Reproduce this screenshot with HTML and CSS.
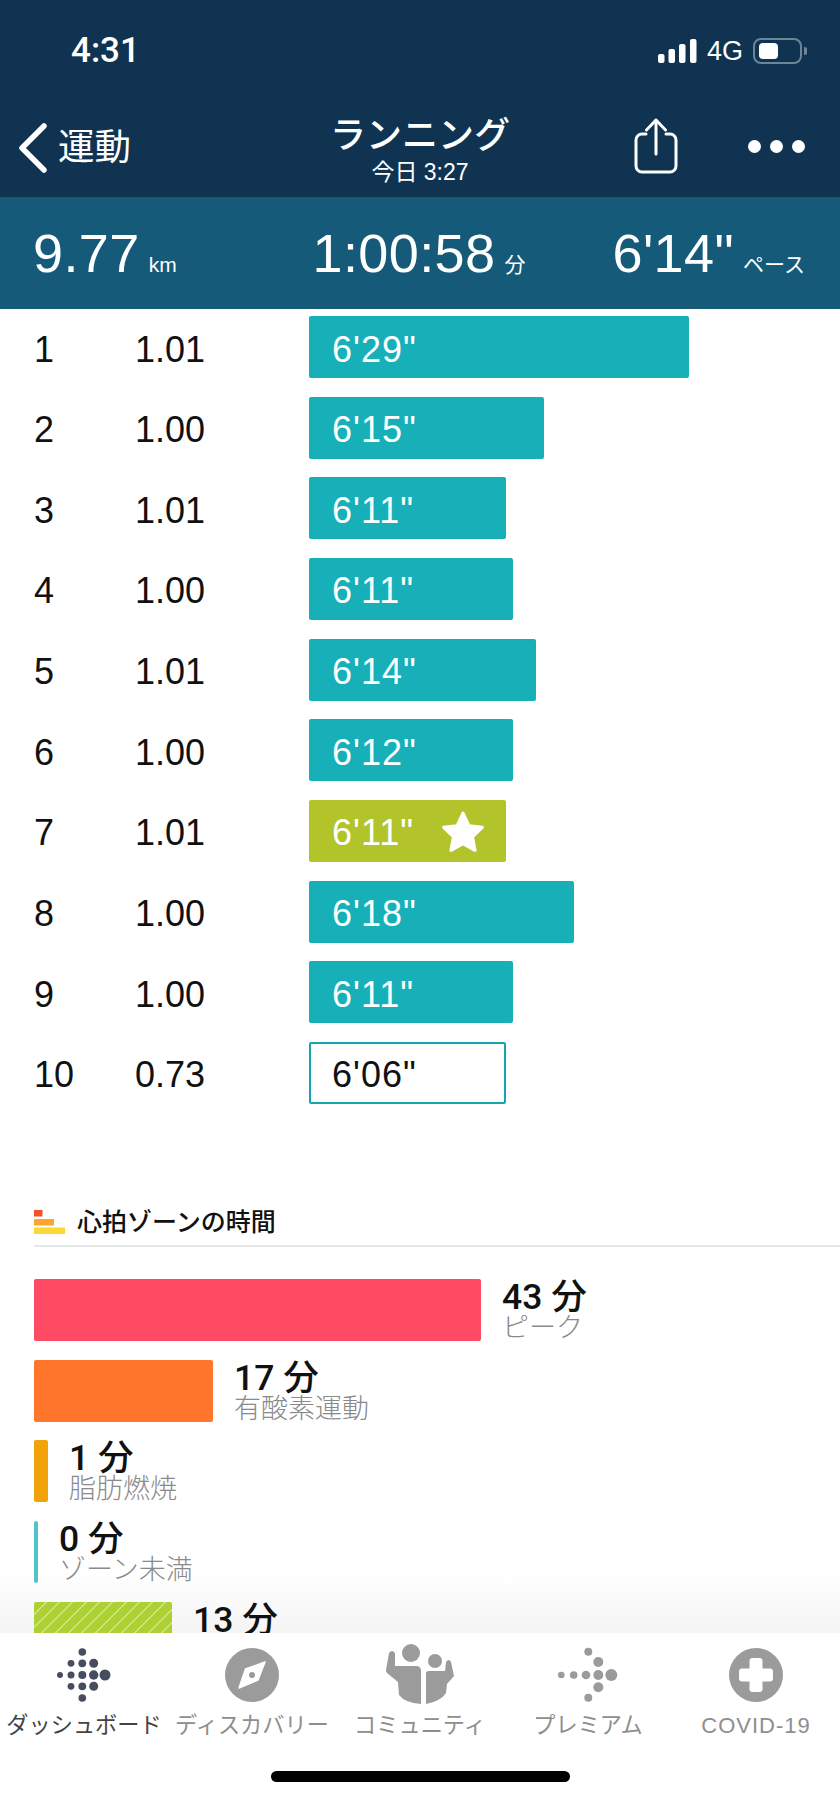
FILE: index.html
```html
<!DOCTYPE html>
<html lang="ja">
<head>
    <meta charset="UTF-8">
    <meta name="viewport" content="width=device-width, initial-scale=1.0">
    <title>ランニング</title>
    <link rel="stylesheet" href="styles.css">
</head>
<body>
    <div class="screen">
        <header class="topbar">
            <div class="status">
                <span class="clock">4:31</span>
                <div class="status-right">
                    <svg class="signal" viewBox="0 0 39 24" width="39" height="24">
                        <rect x="0" y="15" width="6.5" height="9" rx="2" />
                        <rect x="10.5" y="10" width="6.5" height="14" rx="2" />
                        <rect x="21" y="5" width="6.5" height="19" rx="2" />
                        <rect x="32" y="0" width="6.5" height="24" rx="2" />
                    </svg>
                    <span class="network">4G</span>
                    <svg class="battery" viewBox="0 0 54 26" width="54" height="26">
                        <rect x="1" y="1" width="47" height="24" rx="7" fill="none" stroke="#6d8598" stroke-width="2" />
                        <rect x="6" y="5" width="19" height="16" rx="4" fill="#fff" />
                        <path d="M51 9 a4 4 0 0 1 0 8 Z" fill="#6d8598" />
                    </svg>
                </div>
            </div>
            <nav class="navbar">
                <div class="back">
                    <svg viewBox="0 0 32 50" width="32" height="50">
                        <polyline points="27,3 5,25 27,47" fill="none" stroke="#fff" stroke-width="5.5" stroke-linecap="round" stroke-linejoin="round" />
                    </svg>
                    <span>運動</span>
                </div>
                <div class="nav-title">
                    <div class="nav-name">ランニング</div>
                    <div class="nav-time">今日 3:27</div>
                </div>
                <div class="nav-actions">
                    <svg class="share" viewBox="0 0 46 56" width="46" height="56">
                        <path d="M13 16 H9 a6 6 0 0 0 -6 6 V48 a6 6 0 0 0 6 6 H37 a6 6 0 0 0 6 -6 V22 a6 6 0 0 0 -6 -6 H33" fill="none" stroke="#fff" stroke-width="3" stroke-linecap="round" />
                        <path d="M23 36 V2 M13.5 12 L23 2 L32.5 12" fill="none" stroke="#fff" stroke-width="3" stroke-linecap="round" stroke-linejoin="round" />
                    </svg>
                    <div class="more"><i></i><i></i><i></i></div>
                </div>
            </nav>
        </header>

        <section class="stats">
            <div class="stat"><b>9.77</b><small>km</small></div>
            <div class="stat"><b>1:00:58</b><small>分</small></div>
            <div class="stat stat-end"><b>6'14"</b><small>ペース</small></div>
        </section>

        <main class="content">
            <div class="splits">
                <div class="split"><span class="split-no">1</span><span class="split-km">1.01</span><div class="bar" style="width:380px">6'29"</div></div>
                <div class="split"><span class="split-no">2</span><span class="split-km">1.00</span><div class="bar" style="width:235px">6'15"</div></div>
                <div class="split"><span class="split-no">3</span><span class="split-km">1.01</span><div class="bar" style="width:197px">6'11"</div></div>
                <div class="split"><span class="split-no">4</span><span class="split-km">1.00</span><div class="bar" style="width:204px">6'11"</div></div>
                <div class="split"><span class="split-no">5</span><span class="split-km">1.01</span><div class="bar" style="width:227px">6'14"</div></div>
                <div class="split"><span class="split-no">6</span><span class="split-km">1.00</span><div class="bar" style="width:204px">6'12"</div></div>
                <div class="split">
                    <span class="split-no">7</span><span class="split-km">1.01</span>
                    <div class="bar bar-best" style="width:197px">6'11"
                        <svg class="star" viewBox="0 0 44 42" width="46" height="44">
                            <path d="M22 3 L27.6 15 L40.5 16.6 L31 25.6 L33.5 38.5 L22 32.2 L10.5 38.5 L13 25.6 L3.5 16.6 L16.4 15 Z" fill="#fff" stroke="#fff" stroke-width="3" stroke-linejoin="round" />
                        </svg>
                    </div>
                </div>
                <div class="split"><span class="split-no">8</span><span class="split-km">1.00</span><div class="bar" style="width:265px">6'18"</div></div>
                <div class="split"><span class="split-no">9</span><span class="split-km">1.00</span><div class="bar" style="width:204px">6'11"</div></div>
                <div class="split"><span class="split-no">10</span><span class="split-km">0.73</span><div class="bar bar-last" style="width:197px">6'06"</div></div>
            </div>

            <div class="zones-head">
                <svg viewBox="0 0 31 24" width="31" height="24">
                    <rect x="0" y="0" width="8.5" height="6.5" fill="#f4502a" />
                    <rect x="0" y="9" width="20" height="6.5" fill="#fba62f" />
                    <rect x="0" y="17.5" width="31" height="6.5" fill="#fdd835" />
                </svg>
                <h2>心拍ゾーンの時間</h2>
            </div>

            <div class="zones">
                <div class="zone"><div class="zone-bar zone-peak" style="width:447px"></div><div class="zone-text"><b>43 分</b><span>ピーク</span></div></div>
                <div class="zone"><div class="zone-bar zone-cardio" style="width:179px"></div><div class="zone-text"><b>17 分</b><span>有酸素運動</span></div></div>
                <div class="zone"><div class="zone-bar zone-fat" style="width:14px"></div><div class="zone-text"><b>1 分</b><span>脂肪燃焼</span></div></div>
                <div class="zone"><div class="zone-bar zone-below" style="width:4px"></div><div class="zone-text"><b>0 分</b><span>ゾーン未満</span></div></div>
                <div class="zone"><div class="zone-bar zone-rest" style="width:138px"></div><div class="zone-text"><b>13 分</b></div></div>
            </div>
        </main>

        <footer class="tabbar">
            <div class="tabs">
                <div class="tab tab-active">
                    <svg viewBox="0 0 90 64" width="90" height="64" fill="#454d5e">
                        <circle cx="43.3" cy="9" r="3.8" />
                        <circle cx="32" cy="20.3" r="3.4" /><circle cx="43.3" cy="20.3" r="3.9" /><circle cx="54.7" cy="20.3" r="4.5" />
                        <circle cx="21" cy="32" r="3" /><circle cx="32" cy="32" r="3.5" /><circle cx="43.3" cy="32" r="4" /><circle cx="54.7" cy="32" r="4.7" /><circle cx="66" cy="32" r="5.5" />
                        <circle cx="32" cy="43.3" r="3.4" /><circle cx="43.3" cy="43.3" r="3.9" /><circle cx="54.7" cy="43.3" r="4.5" />
                        <circle cx="43.3" cy="55" r="3.8" />
                    </svg>
                    <span>ダッシュボード</span>
                </div>
                <div class="tab">
                    <svg viewBox="0 0 90 64" width="90" height="64">
                        <circle cx="45" cy="32" r="27" fill="#9b9b9b" />
                        <path d="M58 19 L51 37 L32 45 L38.5 26 Z" fill="#fff" stroke="#fff" stroke-width="1.5" stroke-linejoin="round" />
                        <circle cx="45" cy="32" r="3" fill="#9b9b9b" />
                    </svg>
                    <span>ディスカバリー</span>
                </div>
                <div class="tab">
                    <svg viewBox="0 8 90 64" width="90" height="64" fill="#9b9b9b">
                        <circle cx="36" cy="18" r="9" />
                        <circle cx="60" cy="26" r="7" />
                        <path d="M14 18 Q17 14 20 18 L20 31 L41 31 Q46 31 46 36 L46 69 Q30 68 24 60 L23 47 L12 38 Q11 37 11 35 Z" />
                        <path d="M51 38 Q51 36 54 36 L70 36 L71 27 Q74 23 76 27 L79 41 L72 49 L71 58 Q66 66 51 69 Z" />
                    </svg>
                    <span>コミュニティ</span>
                </div>
                <div class="tab">
                    <svg viewBox="0 0 90 64" width="90" height="64" fill="#9b9b9b">
                        <circle cx="45.3" cy="8.7" r="4" />
                        <circle cx="55.3" cy="19" r="5" />
                        <circle cx="18.3" cy="32" r="3.3" /><circle cx="30.7" cy="32" r="3.8" /><circle cx="43" cy="32" r="4.3" /><circle cx="55.3" cy="32" r="5" /><circle cx="68.3" cy="32" r="6" />
                        <circle cx="55.3" cy="44.3" r="5" />
                        <circle cx="45.3" cy="54.7" r="4" />
                    </svg>
                    <span>プレミアム</span>
                </div>
                <div class="tab">
                    <svg viewBox="0 0 90 64" width="90" height="64">
                        <circle cx="45" cy="32" r="27" fill="#9b9b9b" />
                        <rect x="38.5" y="15" width="13" height="34" rx="3" fill="#fff" />
                        <rect x="28" y="25.5" width="34" height="13" rx="3" fill="#fff" />
                    </svg>
                    <span class="tab-latin">COVID-19</span>
                </div>
            </div>
            <div class="home-bar"></div>
        </footer>
    </div>
</body>
</html>
```

FILE: styles.css
```css
/* General page */
* {
    box-sizing: border-box;
}
body {
    margin: 0;
    background: #fff;
    font-family: "Liberation Sans", "Noto Sans CJK JP", sans-serif;
    color: #111;
}
.screen {
    width: 840px;
    height: 1819px;
    display: flex;
    flex-direction: column;
    overflow: hidden;
}

/* Dark header */
.topbar {
    height: 197px;
    background: #0f3350;
    color: #fff;
    flex-shrink: 0;
}
.status {
    height: 100px;
    padding: 37px 33px 0 71px;
    display: flex;
    justify-content: space-between;
    align-items: flex-start;
}
.clock {
    font-family: Roboto, sans-serif;
    font-size: 35px;
    line-height: 28px;
    font-weight: 500;
}
.status-right {
    display: flex;
    align-items: center;
    gap: 10px;
    height: 28px;
}
.network {
    font-size: 27px;
}
.signal {
    fill: #fff;
}
.navbar {
    height: 97px;
    display: grid;
    grid-template-columns: 1fr auto 1fr;
    align-items: start;
}
.back {
    display: flex;
    align-items: center;
    gap: 9px;
    padding: 23px 0 0 17px;
    font-size: 36.5px;
    line-height: 50px;
}
.nav-title {
    text-align: center;
    padding-top: 14px;
}
.nav-name {
    font-size: 36px;
    line-height: 44px;
    font-weight: 500;
}
.nav-time {
    font-size: 23px;
    line-height: 24px;
    margin-top: 2px;
}
.nav-actions {
    display: flex;
    justify-content: flex-end;
    align-items: flex-start;
    padding: 18px 35px 0 0;
    gap: 69px;
}
.more {
    display: flex;
    gap: 9px;
    margin-top: 22px;
}
.more i {
    display: block;
    width: 13px;
    height: 13px;
    border-radius: 50%;
    background: #fff;
}

/* Summary band */
.stats {
    height: 112px;
    flex-shrink: 0;
    background: #155a78;
    color: #fff;
    padding: 0 35px 0 33px;
    display: grid;
    grid-template-columns: 1fr auto 1fr;
    align-items: center;
}
.stat {
    display: flex;
    align-items: baseline;
    gap: 9px;
}
.stat-end {
    justify-content: flex-end;
}
.stat b {
    font-size: 54px;
    font-weight: 400;
    line-height: 60px;
    letter-spacing: 0.4px;
}
.stat small {
    font-size: 21px;
}

/* Scroll area */
.content {
    flex: 1;
    overflow: hidden;
    background: linear-gradient(#fff 1265px, #f4f4f4 1325px);
    padding-top: 7px;
}

/* Split rows */
.splits {
    display: flex;
    flex-direction: column;
    gap: 18.67px;
}
.split {
    display: flex;
    align-items: center;
    height: 62px;
    padding-left: 34px;
    font-size: 36px;
    font-weight: 400;
}
.split-no {
    width: 101px;
    padding-top: 5px;
}
.split-km {
    width: 174px;
    padding-top: 5px;
}
.bar {
    height: 62px;
    padding: 5px 0 0 23px;
    display: flex;
    align-items: center;
    border-radius: 2px;
    letter-spacing: 1px;
    background: #17b0b8;
    color: #fff;
}
.bar-best {
    background: #b3c42b;
}
.bar-last {
    background: #fff;
    color: #111;
    border: 2px solid #17a5ad;
    padding-left: 21px;
}
.star {
    margin: -3px 0 0 26px;
}

/* Heart rate zones */
.zones-head {
    margin: 105px 0 0 34px;
    display: flex;
    align-items: center;
    gap: 12px;
    height: 38px;
    border-bottom: 2px solid #e5e7e8;
    padding-bottom: 9px;
}
.zones-head h2 {
    margin: 0;
    font-size: 25px;
    font-weight: 500;
    line-height: 30px;
}
.zones {
    margin-top: 32px;
    padding-left: 34px;
    display: flex;
    flex-direction: column;
    gap: 18.67px;
}
.zone {
    height: 62px;
    display: flex;
    gap: 21px;
}
.zone-bar {
    height: 62px;
    border-radius: 2px;
}
.zone-peak {
    background: #fe4a62;
}
.zone-cardio {
    background: #ff752b;
}
.zone-fat {
    background: #f2a30a;
}
.zone-below {
    background: #50c4c8;
}
.zone-rest {
    background: repeating-linear-gradient(135deg, #add033 0, #add033 8px, #d0e488 8px, #d0e488 9.4px);
}
.zone-text b {
    display: block;
    font-family: Roboto, "Noto Sans CJK JP", sans-serif;
    font-size: 35.5px;
    font-weight: 500;
    line-height: 36px;
}
.zone-text span {
    display: block;
    font-size: 27px;
    line-height: 27px;
    font-weight: 300;
    color: #8a8a8a;
}

/* Bottom tabs */
.tabbar {
    height: 186px;
    flex-shrink: 0;
    background: #fff;
    padding-top: 10px;
}
.tabs {
    display: grid;
    grid-template-columns: repeat(5, 1fr);
}
.tab {
    display: flex;
    flex-direction: column;
    align-items: center;
    font-size: 22.2px;
    line-height: 28px;
    color: #8e8e8e;
    white-space: nowrap;
}
.tab span {
    margin-top: 5px;
}
.tab .tab-latin {
    font-size: 22px;
    letter-spacing: 1px;
}
.tab-active {
    color: #444;
}
.home-bar {
    width: 299px;
    height: 11px;
    margin: 31px auto 0;
    border-radius: 6px;
    background: #000;
}
```
